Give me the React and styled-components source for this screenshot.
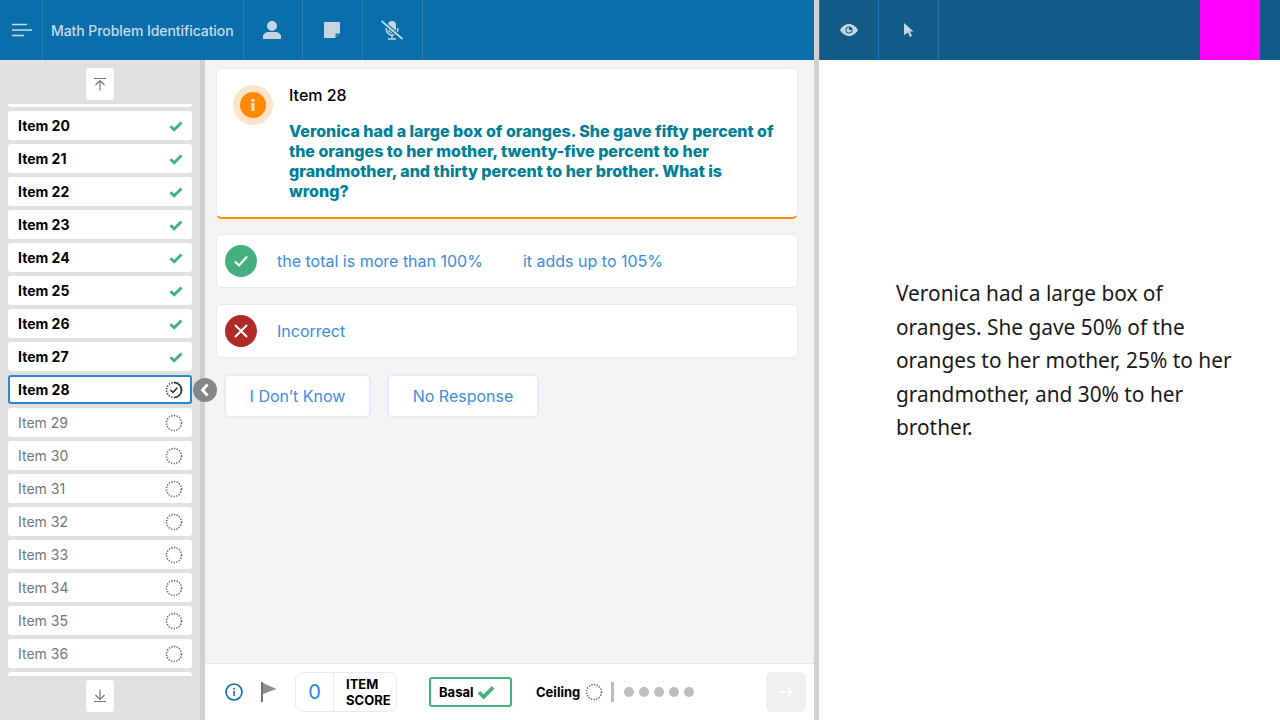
import React from "react";
import styled, { createGlobalStyle } from "styled-components";

const Global = createGlobalStyle`
  html, body { margin: 0; padding: 0; width: 1280px; height: 720px; overflow: hidden; background: #fff; }
  * { box-sizing: border-box; }
  body { font-family: Inter, "Liberation Sans", sans-serif; }
`;

const Page = styled.div`
  width: 1280px; height: 720px; display: grid; grid-template-columns: 814px 5px 461px; overflow: hidden;
`;
const Left = styled.div`display: flex; flex-direction: column; height: 720px; min-width: 0;`;
const Splitter = styled.div`background: #d0d0d0;`;
const Right = styled.div`display: flex; flex-direction: column; height: 720px;`;

const TopBar = styled.header`
  height: 60px; flex: none; display: flex; background: ${p => p.$bg};
`;
const Cell = styled.div`
  height: 60px; width: ${p => p.$w}px; flex: none; display: flex; align-items: center; justify-content: center;
  border-right: 1px solid ${p => p.$line};
  padding: 0 ${p => p.$pr || 0}px 0 ${p => p.$pl || 0}px;
  ${p => p.$lead && `border-left: 1px solid ${p.$line};`}
`;
const Title = styled.div`
  height: 60px; width: 201px; flex: none; display: flex; align-items: center; padding-left: 8px;
  border-right: 1px solid #2a7eb5; color: #c9dcea; font-size: 14px; font-weight: 500; white-space: nowrap;
  letter-spacing: -0.07px;
`;
const RightBarFill = styled.div`flex: 1; display: flex; justify-content: flex-end; padding-right: 20px;`;
const Magenta = styled.div`width: 60px; height: 60px; background: #ff00ff;`;

const Body = styled.div`flex: 1; display: flex; min-height: 0; position: relative;`;
const Side = styled.aside`
  width: 205px; flex: none; background: #e1e1e1; border-right: 5px solid #d0d0d0;
  display: flex; flex-direction: column; align-items: center; padding: 8px 0;
`;
const ScrollBtn = styled.div`
  width: 28px; height: 32px; flex: none; background: #fff; border-radius: 3px;
  display: flex; align-items: center; justify-content: center;
`;
const ItemList = styled.div`
  width: 200px; height: 572px; margin: 4px 0; overflow: hidden; padding: 0 8px;
  display: flex; flex-direction: column; gap: 4px; flex: none;
`;
const Row = styled.div`
  height: 29px; flex: none; background: #fff; border-radius: 3px; display: flex; align-items: center;
  justify-content: space-between; padding: 0 9px 0 10px; font-size: 14px;
  font-weight: ${p => (p.$state === "todo" ? 400 : 700)};
  color: ${p => (p.$state === "todo" ? "#6f7780" : "#000")};
  border: ${p => (p.$state === "current" ? "2px solid #2a86d8" : "none")};
  ${p => p.$state === "current" && "padding: 0 7px 0 8px;"}
  ${p => p.$first && "margin-top: -26px;"}
`;
const Collapse = styled.div`
  position: absolute; left: 193px; top: 318px; width: 24px; height: 24px; border-radius: 50%;
  background: #858787; display: flex; align-items: center; justify-content: center; z-index: 2;
`;

const Main = styled.main`
  flex: 1; min-width: 0; display: flex; flex-direction: column; background: #f3f3f3;
`;
const Content = styled.div`flex: 1; padding: 8px 16px 0 11px; display: flex; flex-direction: column;`;
const QuestionCard = styled.section`
  height: 151px; background: #fff; border: 1px solid #e6eaf2; border-bottom: 2px solid #ff8a00; border-radius: 6px;
  display: flex; padding: 16px 16px 0 16px; gap: 16px;
`;
const Halo = styled.div`
  width: 40px; height: 40px; border-radius: 50%; background: #fde4c8; flex: none;
  display: flex; align-items: center; justify-content: center;
`;
const QBody = styled.div`display: flex; flex-direction: column; margin-top: 0;`;
const QTitle = styled.div`font-size: 16px; font-weight: 500; color: #000; line-height: 20px;`;
const QText = styled.div`
  margin-top: 16px; font-size: 16px; font-weight: 800; line-height: 20px; color: #007f98;
  text-rendering: optimizeLegibility;
`;
const AnswerRow = styled.div`
  height: 54px; margin-top: ${p => p.$mt}px; background: #fff; border: 1px solid #e6eaf2; border-radius: 6px;
  display: flex; align-items: center; padding-left: 8px;
`;
const Badge = styled.div`
  width: 32px; height: 32px; border-radius: 50%; background: ${p => p.$bg}; flex: none;
  display: flex; align-items: center; justify-content: center; margin-right: 20px;
`;
const AnswerText = styled.span`
  font-size: 16px; color: #3c8ce0; margin-right: 40px; white-space: nowrap;
`;
const Buttons = styled.div`display: flex; gap: 16px; margin: 16px 0 0 8px;`;
const Btn = styled.div`
  width: ${p => p.$w}px; height: 44px; background: #fff; border: 2px solid #e6eaf2; border-radius: 6px;
  display: flex; align-items: center; justify-content: center; font-size: 16px; color: #3c8ce0;
`;

const Footer = styled.footer`
  height: 57px; flex: none; background: #fff; border-top: 1px solid #e6e6e6;
  display: flex; align-items: center; padding: 0 8px 0 19px; position: relative;
`;
const ScoreBox = styled.div`
  width: 102px; height: 40px; margin-left: 18px; border: 1px solid #e6eaf2; border-radius: 8px;
  display: flex; align-items: stretch;
`;
const ScoreVal = styled.div`
  width: 38px; border-right: 1px solid #e6eaf2; color: #2a86d8; font-size: 20px;
  display: flex; align-items: center; justify-content: center;
`;
const ScoreLabel = styled.div`
  font-size: 13px; font-weight: 700; line-height: 16px; color: #000; padding: 3px 0 0 12px;
`;
const Basal = styled.div`
  width: 83px; height: 30px; margin-left: 32px; border: 2px solid #45b07f; border-radius: 3px;
  display: flex; align-items: center; padding-left: 8px; gap: 3px; font-size: 13px; font-weight: 700; color: #000;
`;
const Ceiling = styled.div`
  margin-left: 24px; display: flex; align-items: center; gap: 5px; font-size: 13px; font-weight: 700; color: #000;
`;
const Bar = styled.div`width: 3px; height: 20px; background: #bdbdbd; margin: 0 10px 0 8px;`;
const Dots = styled.div`display: flex; gap: 5px;`;
const Dot = styled.div`width: 10px; height: 10px; border-radius: 50%; background: #bdbdbd;`;
const NextBtn = styled.div`
  width: 40px; height: 40px; background: #efefef; border-radius: 6px; margin-left: auto;
  display: flex; align-items: center; justify-content: center;
`;

const Stimulus = styled.div`
  flex: 1; background: #fff; display: flex; align-items: center; padding: 0 40px 58px 77px;
`;
const StimulusText = styled.p`
  margin: 0; font-family: "Noto Sans", sans-serif; font-size: 20.85px; line-height: 33.6px; color: #1a1a1a;
`;

const Check = ({ c = "#45b07f", s = 14 }) => (
  <svg width={s} height={s} viewBox="0 0 14 14"><path d="M1.5 7.2 5.2 10.800 12.5 3.400" fill="none" stroke={c} strokeWidth="2.8" /></svg>
);
const Dotted = ({ current }) => (
  <svg width="18" height="18" viewBox="0 0 18 18">
    <circle cx="9" cy="9" r="7.5" fill="none" stroke={current ? "#333" : "#666"} strokeWidth="1.6" strokeDasharray="1.3 1.4" />
    {current && <path d="M9 1.5A7.5 7.5 0 0 1 9 16.5" fill="none" stroke="#333" strokeWidth="1.6" />}
    {current && <path d="M5.5 9 8 11.3 12.3 6.8" fill="none" stroke="#333" strokeWidth="1.6" />}
  </svg>
);

const names = Array.from({ length: 19 }, (_, i) => 19 + i);
const stateOf = n => (n < 28 ? "done" : n === 28 ? "current" : "todo");

export default function App() {
  return (
    <Page>
      <Global />
      <Left>
        <TopBar $bg="#0a6eaa">
          <Cell $w={43} $line="#2a7eb5" $pl={2}>
            <svg width="20" height="14" viewBox="0 0 20 14">
              <path d="M0 1.5h15M0 7h20M0 12.5h12" stroke="#c9dcea" strokeWidth="1.6" />
            </svg>
          </Cell>
          <Title>Math Problem Identification</Title>
          <Cell $w={59} $line="#2a7eb5" $pr={2}>
            <svg width="18" height="18" viewBox="0 0 18 18" fill="#c4d6e4">
              <circle cx="9" cy="5" r="5" /><path d="M0 18v-2.5C0 12.5 3 11 5.5 11h7c2.5 0 5.500 1.500 5.500 4.500V18Z" />
            </svg>
          </Cell>
          <Cell $w={60} $line="#2a7eb5" $pr={2}>
            <svg width="16" height="16" viewBox="0 0 16 16">
              <path d="M0 0h16v11l-5 5H0Z" fill="#c4d6e4" /><path d="M11.500 11.500H15L11.500 15Z" fill="#0a6eaa" />
            </svg>
          </Cell>
          <Cell $w={60} $line="#2a7eb5" $pr={2}>
            <svg width="24" height="20" viewBox="0 0 24 20" fill="none">
              <rect x="8" y="1" width="8" height="12" rx="4" fill="#c4d6e4" />
              <path d="M6 8c0 4 2.500 7 6 7s6-3 6-7M12 15v3M8 19h8" stroke="#c4d6e4" strokeWidth="1.500" />
              <path d="M1.500 1 22.500 19" stroke="#0a6eaa" strokeWidth="4" />
              <path d="M1.500 1 22.500 19" stroke="#c4d6e4" strokeWidth="1.800" />
            </svg>
          </Cell>
        </TopBar>
        <Body>
          <Side>
            <ScrollBtn>
              <svg width="14" height="14" viewBox="0 0 14 14" fill="none" stroke="#777" strokeWidth="1.200">
                <path d="M1 1.500h12M7 13.500V3.500M2.500 8 7 3.500 11.500 8" />
              </svg>
            </ScrollBtn>
            <ItemList>
              {names.map((n, i) => {
                const s = stateOf(n);
                return (
                  <Row key={n} $state={s} $first={i === 0}>
                    Item {n}
                    {s === "done" ? <Check /> : <Dotted current={s === "current"} />}
                  </Row>
                );
              })}
            </ItemList>
            <ScrollBtn>
              <svg width="14" height="14" viewBox="0 0 14 14" fill="none" stroke="#777" strokeWidth="1.200">
                <path d="M1 12.500h12M7 .5v10M2.500 6 7 10.500 11.500 6" />
              </svg>
            </ScrollBtn>
          </Side>
          <Collapse>
            <svg width="12" height="14" viewBox="0 0 12 14" fill="none" stroke="#fff" strokeWidth="2.800">
              <path d="M8.500 1.500 3.500 7l5 5.500" />
            </svg>
          </Collapse>
          <Main>
            <Content>
              <QuestionCard>
                <Halo>
                  <svg width="26" height="26" viewBox="0 0 26 26">
                    <circle cx="13" cy="13" r="13" fill="#ff8a00" />
                    <rect x="11.500" y="11" width="3" height="8" fill="#fde4c8" />
                    <rect x="11.500" y="7" width="3" height="3" fill="#fde4c8" />
                  </svg>
                </Halo>
                <QBody>
                  <QTitle>Item 28</QTitle>
                  <QText>
                    Veronica had a large box of oranges. She gave fifty percent of the oranges to her mother, twenty-five percent to her grandmother, and thirty percent to her brother. What is wrong?
                  </QText>
                </QBody>
              </QuestionCard>
              <AnswerRow $mt={15}>
                <Badge $bg="#45b07f">
                  <svg width="16" height="14" viewBox="0 0 16 14" fill="none" stroke="#fff" strokeWidth="2">
                    <path d="M2 7.500 6 11.500 14 2.500" />
                  </svg>
                </Badge>
                <AnswerText>the total is more than 100%</AnswerText>
                <AnswerText>it adds up to 105%</AnswerText>
              </AnswerRow>
              <AnswerRow $mt={16}>
                <Badge $bg="#b02a2a">
                  <svg width="14" height="14" viewBox="0 0 14 14" fill="none" stroke="#fff" strokeWidth="2">
                    <path d="M1 1 13 13M13 1 1 13" />
                  </svg>
                </Badge>
                <AnswerText>Incorrect</AnswerText>
              </AnswerRow>
              <Buttons>
                <Btn $w={147}>I Don’t Know</Btn>
                <Btn $w={152}>No Response</Btn>
              </Buttons>
            </Content>
            <Footer>
              <svg width="20" height="20" viewBox="0 0 20 20" fill="none">
                <circle cx="10" cy="10" r="8" stroke="#0a6eaa" strokeWidth="1.600" />
                <rect x="9.200" y="9" width="1.600" height="5" fill="#0a6eaa" />
                <rect x="9.200" y="6" width="1.600" height="1.600" fill="#0a6eaa" />
              </svg>
              <svg width="16" height="20" viewBox="0 0 16 20" style={{ marginLeft: 17 }}>
                <rect x="0" y="0" width="2" height="20" fill="#707070" />
                <path d="M2 1 15.500 7 2 12Z" fill="#909090" />
              </svg>
              <ScoreBox>
                <ScoreVal>0</ScoreVal>
                <ScoreLabel>ITEM<br />SCORE</ScoreLabel>
              </ScoreBox>
              <Basal>Basal<Check s={18} /></Basal>
              <Ceiling>Ceiling <Dotted /></Ceiling>
              <Bar />
              <Dots><Dot /><Dot /><Dot /><Dot /><Dot /></Dots>
              <NextBtn>
                <svg width="14" height="14" viewBox="0 0 14 14" fill="none" stroke="#fff" strokeWidth="1.500">
                  <path d="M1 7h12M7.500 1.500 13 7l-5.500 5.500" />
                </svg>
              </NextBtn>
            </Footer>
          </Main>
        </Body>
      </Left>
      <Splitter />
      <Right>
        <TopBar $bg="#125b87">
          <Cell $w={60} $line="#1a76b4" $lead>
            <svg width="18" height="12" viewBox="0 0 18 12">
              <path d="M0 6C2 2.500 5.500 0 9 0s7 2.500 9 6c-2 3.500-5.500 6-9 6S2 9.500 0 6Z" fill="#c4d6e4" />
              <circle cx="9" cy="6" r="3.500" fill="#125b87" />
              <path d="M9 3.500A2.500 2.500 0 1 0 11.500 6H9Z" fill="#c4d6e4" />
            </svg>
          </Cell>
          <Cell $w={60} $line="#1a76b4">
            <svg width="10" height="14" viewBox="0 0 10 14">
              <path d="M0 0 9.500 8.500H6L8 13l-2 1-2-4.500L0 12Z" fill="#c4d6e4" />
            </svg>
          </Cell>
          <RightBarFill><Magenta /></RightBarFill>
        </TopBar>
        <Stimulus>
          <StimulusText>
            Veronica had a large box of oranges. She gave 50% of the oranges to her mother, 25% to her grandmother, and 30% to her brother.
          </StimulusText>
        </Stimulus>
      </Right>
    </Page>
  );
}
